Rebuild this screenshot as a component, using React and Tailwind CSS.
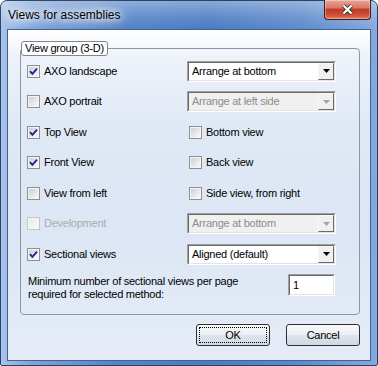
import React from "react";
import clsx from "clsx";

function CheckBox({ checked, disabled }) {
  const id = disabled ? "cb-off" : "cb-on";
  return (
    <svg width="13" height="13" viewBox="0 0 13 13" className="shrink-0">
      <defs>
        <linearGradient id={id} x1="0" y1="0" x2="1" y2="1">
          <stop offset="0" stopColor={disabled ? "#ececec" : "#cdd0d5"} />
          <stop offset="1" stopColor={disabled ? "#f8f8f8" : "#f9f9f9"} />
        </linearGradient>
      </defs>
      <rect x="0.5" y="0.5" width="12" height="12" fill="#f5f5f5" stroke={disabled ? "#c6c6c6" : "#8e8f8f"} />
      <rect x="2" y="2" width="9" height="9" fill={`url(#${id})`} />
      {checked && (
        <path d="M3 6.2 L5.4 8.9 L10 3.6" fill="none" stroke="#1f1f9a" strokeWidth="1.8" />
      )}
    </svg>
  );
}

function Option({ label, checked, disabled }) {
  return (
    <label className={clsx("flex items-center gap-[4px]", disabled ? "text-[#ababab]" : "text-black")}>
      <CheckBox checked={checked} disabled={disabled} />
      <span>{label}</span>
    </label>
  );
}

function Combo({ value, disabled }) {
  return (
    <div className="w-[149px] h-[21px] border border-t-[#a0a0a0] border-l-[#a0a0a0] border-r-white border-b-white">
      <div
        className={clsx(
          "h-full flex items-stretch border border-t-[#696969] border-l-[#696969] border-r-[#e3e3e3] border-b-[#e3e3e3]",
          disabled ? "bg-[#f0f0f0] text-[#8c8c8c]" : "bg-white text-black"
        )}
      >
        <span className="flex-1 pl-[3px] leading-[17px]">{value}</span>
        <span className="w-[16px] flex items-center justify-center bg-[#f0f0f0] border border-t-[#f8f8f8] border-l-[#f8f8f8] border-r-[#696969] border-b-[#696969]">
          <svg width="7" height="4" viewBox="0 0 7 4">
            <path d="M0 0H7L3.5 4Z" fill={disabled ? "#a3a3a3" : "#000"} />
          </svg>
        </span>
      </div>
    </div>
  );
}

const rows = [
  { h: "h-[30px]", left: { label: "AXO landscape", checked: true }, combo: { value: "Arrange at bottom" } },
  { h: "h-[31px]", left: { label: "AXO portrait" }, combo: { value: "Arrange at left side", disabled: true } },
  { h: "h-[30px]", left: { label: "Top View", checked: true }, right: { label: "Bottom view" } },
  { h: "h-[31px]", left: { label: "Front View", checked: true }, right: { label: "Back view" } },
  { h: "h-[30px]", left: { label: "View from left" }, right: { label: "Side view, from right" } },
  { h: "h-[31px]", left: { label: "Development", disabled: true }, combo: { value: "Arrange at bottom", disabled: true } },
  { h: "h-[30px]", left: { label: "Sectional views", checked: true }, combo: { value: "Aligned (default)" } },
];

export default function App() {
  return (
    <div className="w-[378px] h-[366px] flex flex-col border border-[#2b4266] rounded-t-[7px] rounded-b-[2px] bg-[linear-gradient(90deg,#a9c4e9_0%,#7fa4da_8%,#5584c8_30%,#4a7bc2_55%,#5e8bcb_80%,#86a9dc_100%)] font-['Liberation_Sans',Arial,sans-serif] text-[11px] tracking-[-0.25px] select-none">
      {/* title bar */}
      <div className="h-[28px] shrink-0 flex bg-[linear-gradient(180deg,rgba(255,255,255,0.35)_0%,rgba(255,255,255,0.1)_60%,rgba(255,255,255,0)_100%)] rounded-t-[6px]">
        <div className="flex-1 flex items-center pl-[7px] text-[12px] tracking-normal text-black [text-shadow:0_0_6px_#fff,0_0_10px_#fff,0_0_16px_#fff,0_0_20px_#fff]">
          Views for assemblies
        </div>
        <button className="self-start mr-[6px] w-[47px] h-[20px] -mt-px flex items-center justify-center rounded-b-[4px] border border-[#4a1a12] border-t-0 bg-[linear-gradient(180deg,#e8a797_0%,#d77a66_40%,#c23c27_50%,#c94a34_75%,#dc7a5f_100%)] shadow-[inset_0_0_0_1px_rgba(255,255,255,0.35)]">
          <svg width="13" height="11" viewBox="0 0 13 11">
            <path d="M2.5 1.5L10.5 9.5M10.5 1.5L2.5 9.5" stroke="#3a3a3a" strokeWidth="4" />
            <path d="M2.5 1.5L10.5 9.5M10.5 1.5L2.5 9.5" stroke="#fff" strokeWidth="2.2" />
          </svg>
        </button>
      </div>

      {/* client area */}
      <div className="mx-[6px] h-[332px] shrink-0 border border-[#3f6396] bg-[linear-gradient(180deg,#ffffff_0%,#eef3fa_8%,#dfe8f5_30%,#dce6f4_60%,#e5ecf7_100%)] flex flex-col">
        <fieldset className="ml-[12px] mt-[11px] w-[340px] h-[274px] border border-[#8d96a3] rounded-[4px]">
          <legend className="ml-0 px-[3px] h-[15px] leading-[13px] border border-[#7d8794] rounded-[3px] bg-white text-black">
            View group (3-D)
          </legend>

          <div className="pl-[6px] flex flex-col">
            {rows.map((r) => (
              <div key={r.left.label} className={clsx("flex items-center", r.h)}>
                <div className="w-[160px]">
                  <Option {...r.left} />
                </div>
                {r.combo ? (
                  <Combo {...r.combo} />
                ) : (
                  <div className="pl-[2px]">
                    <Option {...r.right} />
                  </div>
                )}
              </div>
            ))}
          </div>

          <div className="mt-[6px] pl-[7px] flex items-start">
            <div className="w-[260px] leading-[13px] text-black">
              Minimum number of sectional views per page
              <br />
              required for selected method:
            </div>
            <div className="-mt-px w-[47px] h-[22px] border border-t-[#a0a0a0] border-l-[#a0a0a0] border-r-white border-b-white">
              <div className="h-full bg-white border border-t-[#696969] border-l-[#696969] border-r-[#e3e3e3] border-b-[#e3e3e3] pl-[3px] leading-[18px] text-black">
                1
              </div>
            </div>
          </div>
        </fieldset>

        <div className="mt-[9px] mr-[10px] flex justify-end gap-[16px]">
          <button className="w-[74px] h-[22px] rounded-[3px] border border-[#303030] bg-[linear-gradient(180deg,#f7f8fa_0%,#eceff3_48%,#dde3ea_52%,#d2d9e2_100%)] text-black outline-1 outline-dotted outline-black -outline-offset-4">
            OK
          </button>
          <button className="w-[74px] h-[22px] rounded-[3px] border border-[#303030] bg-[linear-gradient(180deg,#f7f8fa_0%,#eceff3_48%,#dde3ea_52%,#d2d9e2_100%)] text-black">
            Cancel
          </button>
        </div>
      </div>
    </div>
  );
}
